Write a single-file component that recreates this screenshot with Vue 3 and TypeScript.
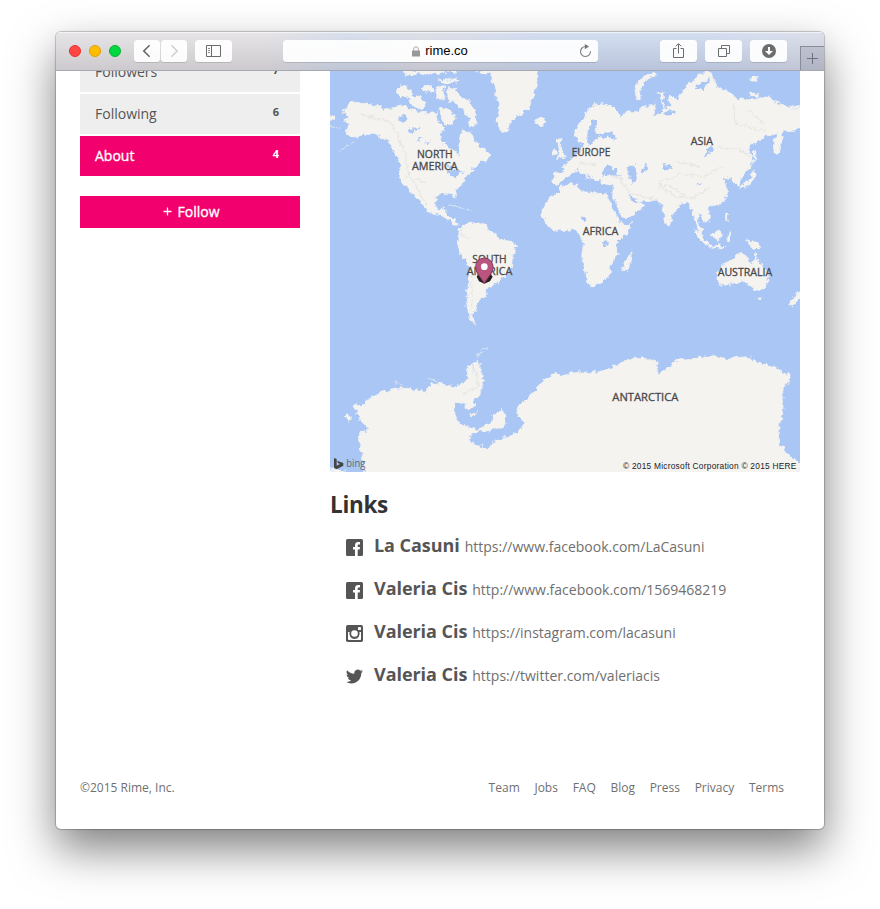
<script setup lang="ts">
interface MenuItem { label: string; count: number; active?: boolean }
interface SocialLink { kind: 'facebook' | 'instagram' | 'twitter'; name: string; url: string }
interface MapLabel { text: string; x: number; y: number; width: number }

const menu: MenuItem[] = [
  { label: 'Followers', count: 7 },
  { label: 'Following', count: 6 },
  { label: 'About', count: 4, active: true },
]

const links: SocialLink[] = [
  { kind: 'facebook', name: 'La Casuni', url: 'https://www.facebook.com/LaCasuni' },
  { kind: 'facebook', name: 'Valeria Cis', url: 'http://www.facebook.com/1569468219' },
  { kind: 'instagram', name: 'Valeria Cis', url: 'https://instagram.com/lacasuni' },
  { kind: 'twitter', name: 'Valeria Cis', url: 'https://twitter.com/valeriacis' },
]

const footerLinks: string[] = ['Team', 'Jobs', 'FAQ', 'Blog', 'Press', 'Privacy', 'Terms']

const labels: MapLabel[] = [
  { text: 'NORTH', x: 261, y: 264, width: 107 },
  { text: 'AMERICA', x: 246, y: 300, width: 137 },
  { text: 'SOUTH', x: 427, y: 580, width: 103 },
  { text: 'AMERICA', x: 410, y: 616, width: 137 },
  { text: 'EUROPE', x: 725, y: 258, width: 116 },
  { text: 'ASIA', x: 1082, y: 225, width: 67 },
  { text: 'AFRICA', x: 758, y: 495, width: 107 },
  { text: 'AUSTRALIA', x: 1163, y: 618, width: 164 },
  { text: 'ANTARCTICA', x: 847, y: 994, width: 198 },
]

const land: string[] = [
  // North America
  'M40 120L62 95L90 98L130 105L160 118L195 112L225 105L250 122L300 130L320 128L326 160L345 175L330 195L335 215L350 230L372 238L390 262L388 235L390 215L397 180L410 185L425 190L440 215L462 240L480 255L470 270L450 275L440 290L420 305L405 325L395 345L378 358L375 385L365 370L345 370L318 378L312 400L325 420L345 415L348 430L365 445L385 462L372 463L345 442L325 432L300 428L280 405L265 385L245 372L232 350L212 335L208 300L215 290L195 250L175 210L140 195L110 190L80 205L55 195L45 178L60 165L40 152L58 145L45 130Z',
  'M0 138L15 135L18 150L0 155Z',
  // Arctic islands
  'M202 50L222 42L250 75L275 82L290 108L270 118L235 100L242 82L205 80Z',
  'M212 0L228 16L258 14L262 6L290 14L310 8L330 12L350 4L380 10L382 0Z',
  'M275 52L300 45L315 60L290 68Z', 'M320 55L340 50L345 85L325 88Z', 'M322 25L350 30L380 22L385 36L345 42Z',
  'M352 55L380 55L388 78L412 88L430 112L442 165L415 168L418 145L400 118L380 108L375 88L355 98Z',
  'M328 112L350 118L378 140L352 170L335 150Z',
  // Greenland and Iceland
  'M425 0L480 12L490 40L500 80L510 110L500 150L515 187L530 185L545 150L570 135L600 110L612 70L622 40L620 0Z',
  'M614 150L635 140L648 152L635 168L618 162Z',
  // South America
  'M385 490L398 465L430 458L465 465L495 490L510 508L550 515L563 528L548 555L545 590L535 610L505 630L490 650L470 655L470 672L445 690L440 715L425 735L435 764L418 745L410 700L415 640L420 600L410 575L390 550L383 520Z',
  // Africa
  'M640 410L655 385L690 365L690 350L715 345L745 342L745 360L790 370L832 372L845 405L862 440L880 466L908 458L890 490L860 520L862 555L845 575L840 600L835 620L815 635L785 648L775 640L765 600L755 560L760 520L745 490L725 478L705 482L670 480L650 465L638 440Z',
  'M882 580L902 548L905 565L892 602L880 602Z',
  // Europe and Asia
  'M668 340L672 310L703 306L700 288L730 262L755 240L762 225L745 215L733 190L740 175L765 140L775 118L805 98L845 108L868 130L870 145L890 125L915 125L945 108L975 110L983 65L1000 70L1000 115L1022 110L1015 75L1045 90L1065 50L1100 20L1130 5L1150 15L1160 50L1200 65L1215 85L1260 90L1290 85L1310 75L1330 95L1370 110L1420 115L1420 172L1390 185L1360 180L1355 210L1345 252L1330 240L1332 210L1345 190L1310 198L1285 210L1255 235L1265 260L1262 290L1235 320L1228 345L1215 340L1205 325L1180 325L1188 350L1190 375L1175 400L1150 408L1130 410L1140 440L1140 455L1125 455L1110 435L1100 430L1105 460L1120 485L1112 490L1098 465L1085 420L1075 395L1055 400L1035 425L1025 440L1020 468L1008 462L995 400L975 390L955 395L920 390L940 405L935 420L905 435L885 448L875 440L860 405L848 375L850 345L815 342L812 325L795 335L775 310L755 298L735 300L720 315L700 330L685 345Z',
  'M748 295L760 300L782 328L770 325Z', 'M682 208L692 205L692 235L706 262L680 265L688 240Z', 'M668 240L680 238L678 252L668 254Z',
  // Islands around Asia
  'M975 5L955 12L930 30L915 60L918 85L930 88L935 45L960 22L978 15Z',
  'M1270 240L1282 268L1270 275Z', 'M1268 300L1280 308L1262 345L1228 358L1235 345L1258 335Z',
  'M1088 473L1105 482L1135 520L1128 525L1100 495Z', 'M1130 524L1185 530L1180 536L1135 530Z',
  'M1145 495L1165 480L1178 488L1168 512L1148 508Z', 'M1192 490L1202 488L1198 515L1190 510Z',
  'M1250 510L1275 515L1295 530L1275 538L1255 522Z', 'M1185 430L1192 430L1195 458L1188 450Z',
  'M1258 20L1285 20L1280 34L1262 32Z', 'M1260 70L1285 68L1285 80L1262 80Z',
  // Australia and New Zealand
  'M1163 605L1175 590L1205 568L1225 550L1245 552L1255 572L1270 578L1275 552L1290 580L1310 600L1315 625L1305 655L1280 665L1262 650L1245 635L1220 635L1185 648L1165 640Z',
  'M1283 684L1298 684L1292 692Z', 'M1375 705L1405 665L1414 660L1414 680L1385 710Z',
  // Antarctica
  'M105 1220L95 1150L85 1100L90 1085L120 1080L95 1060L90 1040L70 1010L78 1003L100 1008L120 985L160 965L190 955L240 955L290 965L300 945L330 940L370 950L400 940L430 915L432 880L445 870L455 910L460 940L450 975L430 990L432 1010L412 1018L400 995L375 1000L375 1040L390 1060L440 1080L480 1060L490 1040L515 1015L525 1040L525 1070L495 1080L450 1085L415 1095L430 1125L465 1130L470 1142L490 1115L560 1090L583 1060L560 1030L570 1005L600 975L640 930L670 910L705 918L735 905L800 908L840 895L870 880L915 860L980 872L985 915L1000 905L1040 870L1090 865L1150 858L1190 865L1250 860L1290 880L1340 895L1382 920L1370 940L1355 960L1360 1030L1345 1060L1345 1110L1370 1150L1420 1188L1420 1220Z',
  'M45 1035L58 1035L64 1055L50 1052Z', 'M412 890L428 885L428 925L412 920Z', 'M422 1035L440 1025L430 1042Z', 'M0 1196L60 1206L0 1206Z',
]

const inlandWater: string[] = [
  'M205 138L225 134L234 148L212 156Z', 'M232 178L272 170L250 190L235 188Z', 'M258 206L282 201L265 213Z', 'M285 215L302 213L296 226Z',
  'M350 305L385 298L402 310L365 319Z', 'M350 286L367 288L362 302Z',
  'M785 148L804 150L794 180L800 193L845 186L864 210L835 200L805 202L790 217L772 222L772 190Z',
  'M820 315L818 298L835 286L850 298L867 293L860 308L872 317Z', 'M893 288L917 286L920 337L906 344L898 320Z', 'M933 295L950 283L950 302L938 309Z',
  'M996 286L1027 286L1024 298L998 298Z', 'M1116 260L1145 223L1150 235L1128 260Z', 'M1096 44L1125 36L1142 22L1122 57L1098 57Z',
  'M892 372L902 378L930 395L910 397Z', 'M1095 339L1117 341L1105 347Z', 'M754 438L770 445L766 454L753 449Z', 'M826 512L836 515L832 529L822 524Z',
  'M978 68L992 73L998 127L976 139Z', 'M1002 131L1015 121L1038 129L1010 134Z',
]
</script>

<template>
  <div class="page">
    <div class="window">
      <header class="toolbar">
        <div class="lights"><i class="red"></i><i class="amber"></i><i class="green"></i></div>
        <div class="nav">
          <span class="btn half"><svg width="26" height="22" viewBox="0 0 26 22"><path d="M15.600 5.200L9.800 11l5.800 5.800" fill="none" stroke="#656565" stroke-width="1.600" /></svg></span>
          <span class="btn half"><svg width="26" height="22" viewBox="0 0 26 22"><path d="M10.400 5.200L16.200 11l-5.800 5.800" fill="none" stroke="#cfcfcf" stroke-width="1.500" /></svg></span>
        </div>
        <span class="btn sidebar-btn"><svg width="37" height="22" viewBox="0 0 37 22" fill="none" stroke="#6b6b6b"><path d="M11.500 5.500H25.500V16.500H11.500ZM16.500 5.500V16.500" /><path d="M13 8.500h2M13 10.500h2M13 12.500h2" stroke="#8d8d8d" /></svg></span>
        <div class="address">
          <svg class="lock" width="8" height="11" viewBox="0 0 8 11"><path d="M1.700 5V3.100a2.300 2.300 0 0 1 4.600 0V5" fill="none" stroke="#aaa" stroke-width="1" /><rect y="4.500" width="8" height="6" rx=".6" fill="#999" /></svg>
          <span>rime.co</span>
          <svg class="reload" width="13" height="14" viewBox="0 0 13 14"><path d="M6.500 2.500A5 5 0 1 0 11.500 7.300" fill="none" stroke="#808080" stroke-width="1.100" /><path d="M5.800 0L10 2.600L5.800 5.200Z" fill="#747474" /></svg>
        </div>
        <div class="actions">
          <span class="btn"><svg width="37" height="22" viewBox="0 0 37 22" fill="none" stroke="#6d6d6d"><path d="M16.500 8.500H13.500V17.500H23.500V8.500H20.500M18.500 13.500V4M15.800 6.300L18.500 3.600L21.200 6.300" /></svg></span>
          <span class="btn"><svg width="37" height="22" viewBox="0 0 37 22" fill="none" stroke="#6d6d6d"><path d="M13.500 8.500H21.500V16.500H13.500ZM16.500 8V5.500H24.500V13.500H22" /></svg></span>
          <span class="btn"><svg width="37" height="22" viewBox="0 0 37 22"><circle cx="19" cy="11" r="7" fill="#6d6d6d" /><path d="M18 7h2v4h3l-4 4-4-4h3z" fill="#fff" /></svg></span>
        </div>
        <span class="new-tab"><svg width="23" height="23" viewBox="0 0 23 23"><path d="M6 11.500H17M11.500 6V17" stroke="#6b7080" fill="none" /></svg></span>
      </header>

      <main class="content">
        <aside class="side">
          <nav class="menu">
            <a v-for="item in menu" :key="item.label" class="menu-item" :class="{ active: item.active }">
              <span>{{ item.label }}</span><b>{{ item.count }}</b>
            </a>
          </nav>
          <button class="follow"><svg width="9" height="9" viewBox="0 0 9 9"><path d="M.5 4.500H8.500M4.500 .5V8.500" stroke="#fff" stroke-width="1.300" /></svg>Follow</button>
        </aside>

        <section class="about">
          <svg class="map" width="470" height="401" viewBox="0 3 1410 1203">
            <defs>
              <filter id="coast" filterUnits="userSpaceOnUse" x="-20" y="-20" width="1450" height="1250" color-interpolation-filters="sRGB">
                <feTurbulence type="fractalNoise" baseFrequency="0.07" numOctaves="3" seed="4" result="n" />
                <feDisplacementMap in="SourceGraphic" in2="n" scale="20" xChannelSelector="R" yChannelSelector="G" />
              </filter>
            </defs>
            <rect x="-10" width="1430" height="1210" fill="#a9c6f5" />
            <g filter="url(#coast)">
              <g fill="#f4f3f0" stroke="#f4f3f0" stroke-width="2"><path v-for="d in land" :key="d" :d="d" /></g>
              <g fill="none" stroke="#e3eaf4" stroke-width="2.500">
                <path d="M25 245L75 215M0 170L30 175M360 405L390 412L425 425M437 875L448 845L478 830M195 938L225 950M290 925L320 930" />
              </g>
              <g fill="none" stroke="#e7e6e3" stroke-width="4">
                <path d="M85 130L140 145L180 155L205 200L225 250L235 310L265 360L290 405M225 320L285 335M390 490L415 510M425 610L425 720M985 350L1040 380L1090 385L1140 350M985 340L1050 310L1120 320L1180 290M870 325L900 370L970 385M1040 275L1110 290M1210 95L1215 160L1310 185M1160 230L1220 235L1260 260M850 320L880 330M745 280L800 285M990 345L1020 350L1070 380M1255 120L1300 160M440 905L445 950L400 970" />
              </g>
              <g fill="#a9c6f5"><path v-for="d in inlandWater" :key="d" :d="d" /></g>
              <path d="M838 378L858 415L876 456" stroke="#a9c6f5" stroke-width="8" fill="none" />
            </g>
            <g class="map-label">
              <text v-for="l in labels" :key="l.text + l.x" :x="l.x" :y="l.y" :textLength="l.width" lengthAdjust="spacingAndGlyphs">{{ l.text }}</text>
            </g>
            <path d="M440 620L447 608L479 608L488 620L480 634L463 641L447 634Z" fill="#2a2024" />
            <path d="M463 640C455 624 437 610 437 590A26 26 0 0 1 489 590C489 610 471 624 463 640Z" fill="#ba557f" stroke="#87385a" stroke-width="3" />
            <circle cx="463" cy="590" r="10" fill="#fff" />
            <path d="M12 1164L20 1167V1187L30 1182L24 1179L21 1172L40 1179V1187L20 1198L12 1193Z" fill="#454545" />
            <text class="bing" x="49" y="1191" textLength="57" lengthAdjust="spacingAndGlyphs">bing</text>
            <text class="credit" x="879" y="1197" textLength="520">© 2015 Microsoft Corporation © 2015 HERE</text>
          </svg>

          <h2>Links</h2>
          <ul class="links">
            <li v-for="link in links" :key="link.url">
              <svg v-if="link.kind === 'facebook'" width="17" height="17" viewBox="0 0 17 17"><rect width="17" height="17" rx="1.500" fill="#555" /><path d="M9 17V10.500H7V8H9V6.300C9 4.200 10.200 3 12.200 3H14V5.500H12.700C11.900 5.500 11.700 5.900 11.700 6.600V8H14L13.700 10.500H11.700V17Z" fill="#fff" /></svg>
              <svg v-else-if="link.kind === 'instagram'" width="17" height="17" viewBox="0 0 17 17"><rect width="17" height="17" rx="1.800" fill="#555" /><path d="M2 7H3.600A5.200 5.200 0 1 0 13.400 7H15V14.300Q15 15 14.300 15H2.700Q2 15 2 14.300Z" fill="#fff" /><circle cx="8.500" cy="8.500" r="3.300" fill="#fff" /><rect x="12" y="2" width="3" height="3" rx=".4" fill="#fff" /></svg>
              <svg v-else width="17" height="17" viewBox="0 0 24 24"><path d="M23.950 4.570a10 10 0 0 1-2.820.770 4.960 4.960 0 0 0 2.160-2.720c-.950.550-2 .950-3.120 1.190a4.920 4.920 0 0 0-8.380 4.480C7.690 8.090 4.070 6.130 1.640 3.160a4.920 4.920 0 0 0 1.520 6.570 4.900 4.900 0 0 1-2.230-.610v.060a4.920 4.920 0 0 0 3.950 4.830 5 5 0 0 1-2.210.080 4.940 4.940 0 0 0 4.600 3.420A9.870 9.870 0 0 1 0 19.540a14 14 0 0 0 7.550 2.210c9.050 0 14-7.500 14-13.980l-.020-.640a10 10 0 0 0 2.420-2.560z" fill="#555" /></svg>
              <strong>{{ link.name }}</strong>
              <a>{{ link.url }}</a>
            </li>
          </ul>
        </section>
      </main>

      <footer class="footer">
        <span>©2015 Rime, Inc.</span>
        <nav><a v-for="f in footerLinks" :key="f">{{ f }}</a></nav>
      </footer>
    </div>
  </div>
</template>

<style>
body { background: #fff; overflow: hidden; }
</style>

<style scoped>
.page { box-sizing: border-box; width: 880px; height: 909px; padding: 32px 56px 80px; font-family: "Open Sans", "Noto Sans", sans-serif; overflow: hidden; }
.window { display: flex; flex-direction: column; height: 797px; background: #fff; border-radius: 5px; box-shadow: 0 0 1px 1px rgba(0, 0, 0, .22), 0 20px 45px rgba(0, 0, 0, .5); overflow: hidden; }
.toolbar { box-sizing: border-box; flex: none; display: flex; align-items: flex-start; height: 39px; padding: 8px 0 0 13px; border-bottom: 1px solid #a7a9b2; box-shadow: inset 0 1px rgba(255, 255, 255, .6); background: linear-gradient(rgba(255, 255, 255, .22), rgba(80, 75, 90, .13)), linear-gradient(90deg, #e0dde0 0, #e0dde0 210px, #cfd8e9 290px, #d7d9e2 370px, #c9d6ee 480px, #c9d6ee 650px, #d4d8e6 768px); }
.lights { display: flex; gap: 8px; padding-top: 5px; }
.lights i { box-sizing: border-box; width: 12px; height: 12px; border-radius: 50%; border: 1px solid; }
.lights .red { background: #ff4643; border-color: #e5302e; }
.lights .amber { background: #ffbd00; border-color: #e2a000; }
.lights .green { background: #00d742; border-color: #00b52f; }
.nav { display: flex; gap: 1px; margin-left: 13px; }
.btn { width: 37px; height: 22px; border-radius: 3.500px; background: rgba(255, 255, 255, .93); box-shadow: 0 1px rgba(0, 0, 0, .13); }
.btn svg, .new-tab svg { display: block; }
.half { width: 26px; }
.sidebar-btn { margin-left: 8px; }
.address { display: flex; align-items: center; justify-content: center; gap: 5px; box-sizing: border-box; width: 315px; height: 22px; margin-left: 51px; padding: 0 6px 0 23px; border-radius: 3.500px; background: rgba(255, 255, 255, .93); box-shadow: 0 1px rgba(0, 0, 0, .13); font: 13px/22px "Liberation Sans", Arial, sans-serif; color: #000; }
.lock { margin-left: auto; }
.reload { margin-left: auto; }
.actions { display: flex; gap: 8px; margin-left: 62px; }
.new-tab { box-sizing: border-box; width: 24px; height: 24px; margin: 6px 0 0 13px; border: solid #868c9b; border-width: 1px 0 0 1px; background: rgba(110, 115, 130, .2); }
.content { flex: none; display: flex; gap: 30px; height: 665px; padding: 0 24px; overflow: hidden; }
.side { width: 220px; margin-top: -19px; }
.menu { display: flex; flex-direction: column; gap: 2px; }
.menu-item { box-sizing: border-box; display: flex; justify-content: space-between; height: 40px; padding: 0 21px 0 15px; background: #eee; color: #555; font-size: 14px; line-height: 40px; }
.menu-item b { font-size: 11px; line-height: 35px; }
.menu-item.active { background: #f2006d; color: #fff; }
.menu-item.active span, .follow { -webkit-text-stroke: .35px #fff; }
.follow { display: flex; align-items: center; justify-content: center; gap: 6px; width: 220px; height: 32px; margin-top: 20px; padding: 0 0 1px 2px; border: 0; background: #f2006d; color: #fff; font: 14px "Open Sans", sans-serif; }
.about { width: 470px; }
.map { display: block; border-radius: 0 0 4px 4px; }
.map-label { font: 33px "Open Sans", sans-serif; fill: #48484a; stroke: #48484a; stroke-width: .9; }
.bing { font: 32px "Open Sans", sans-serif; fill: #666; }
.credit { font: 25px "Liberation Sans", sans-serif; fill: #222; }
h2 { margin: 17px 0 0; font-size: 22.500px; line-height: 32px; color: #333; letter-spacing: -.3px; }
.links { margin: 5px 0 0; padding: 0 0 0 16px; list-style: none; }
.links li { display: flex; align-items: baseline; height: 43px; line-height: 39px; color: #555; }
.links li svg { align-self: center; margin-right: 11px; }
.links strong { font-size: 18px; letter-spacing: -.05px; }
.links a { margin-left: 5px; font-size: 14px; color: #6f6f6f; }
.footer { display: flex; align-items: center; justify-content: space-between; padding: 15px 40px 0 24px; font-size: 12px; line-height: 16px; color: #707070; margin-top: 29px; }
.footer nav { display: flex; gap: 14.700px; }
</style>
